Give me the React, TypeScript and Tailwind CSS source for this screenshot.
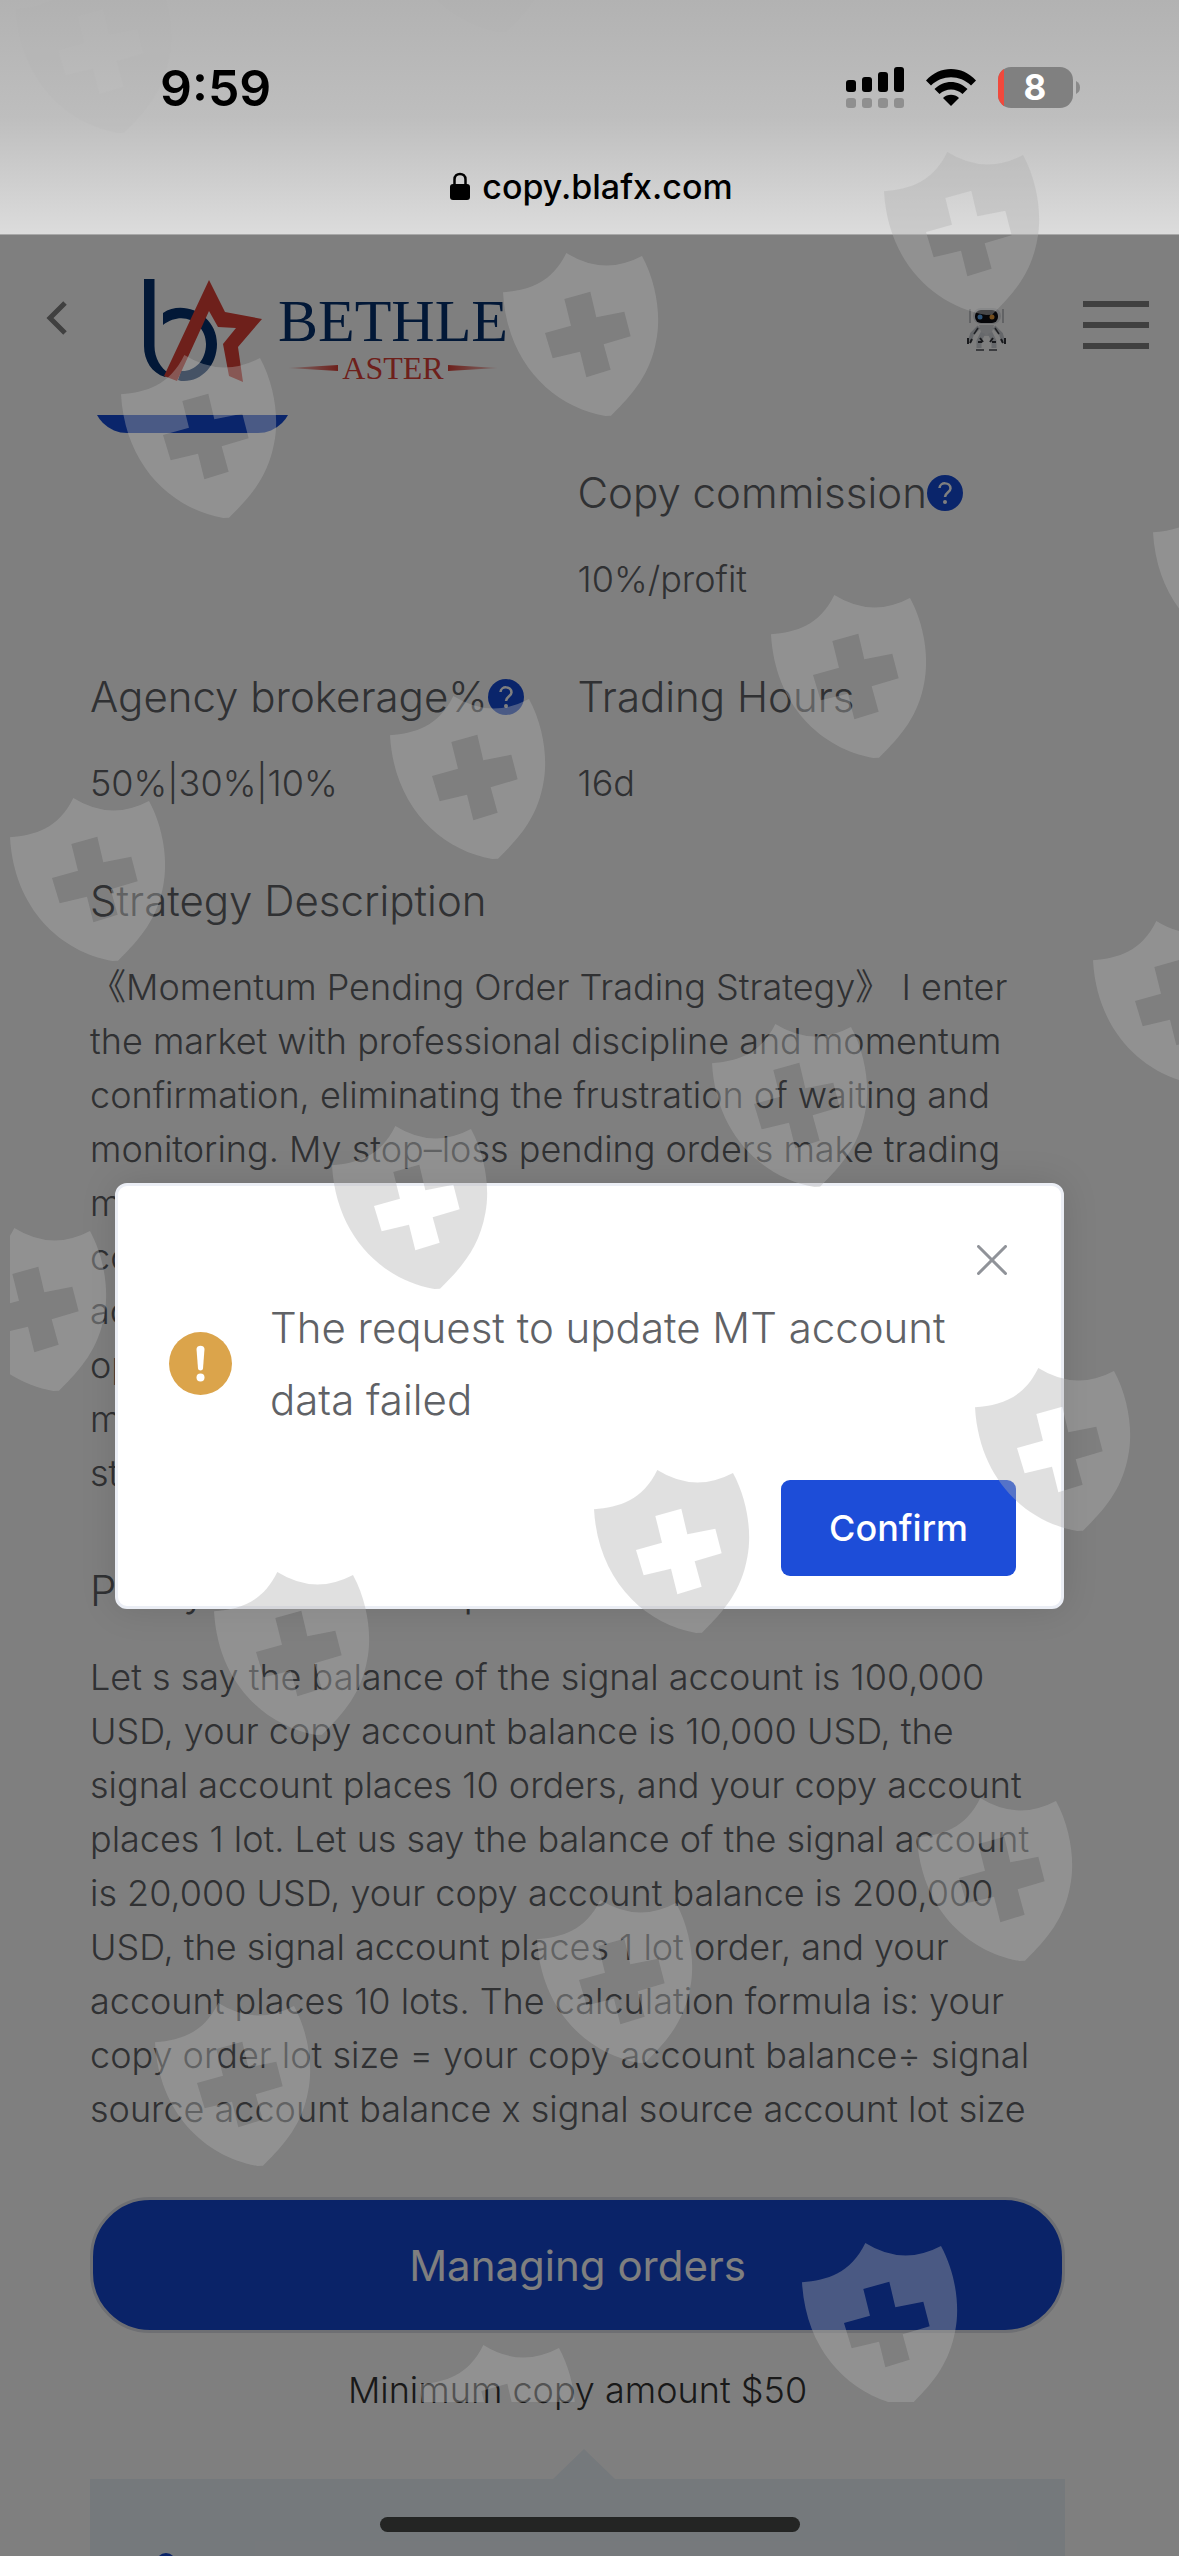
import { useState } from "react";

const strategyLines = [
  "《Momentum Pending Order Trading Strategy》 I enter",
  "the market with professional discipline and momentum",
  "confirmation, eliminating the frustration of waiting and",
  "monitoring. My stop–loss pending orders make trading",
  "more relaxed and stable. Every order is placed with",
  "complete risk control, and the plan is followed",
  "across each session. When a signal appears the",
  "operation is carried out in time, and the",
  "market is left to confirm the direction with a",
  "strict stop on every position.",
];

const policyLines = [
  "Let s say the balance of the signal account is 100,000",
  "USD, your copy account balance is 10,000 USD, the",
  "signal account places 10 orders, and your copy account",
  "places 1 lot. Let us say the balance of the signal account",
  "is 20,000 USD, your copy account balance is 200,000",
  "USD, the signal account places 1 lot order, and your",
  "account places 10 lots. The calculation formula is: your",
  "copy order lot size = your copy account balance÷ signal",
  "source account balance x signal source account lot size",
];

const shields = [
  [16, -30], [398, -131],
  [121, 355], [503, 253], [884, 152],
  [10, 798], [390, 696], [771, 595], [1153, 493],
  [-49, 1228], [332, 1126], [712, 1024], [1093, 921],
  [214, 1572], [594, 1470], [975, 1368],
  [155, 2003], [537, 1900], [917, 1798],
  [420, 2345], [802, 2243],
];

function Watermark() {
  return (
    <svg className="pointer-events-none absolute left-0 top-0 z-30 h-[2402px] w-full" aria-hidden="true">
      <defs>
        <path
          id="shield"
          fillRule="evenodd"
          transform="scale(0.3333) translate(-38 -38)"
          d="M38 156C115 149 183 130 228 38Q340 108 455 47C500 130 512 230 498 300C480 400 430 460 362 526L345 527C190 500 50 370 38 156ZM222 176L242 256L164 278L187 354L269 334L288 411L361 388L340 312L421 288L402 214L318 231L300 154Z"
        />
        <clipPath id="shieldArea">
          <rect x="10" y="0" width="4000" height="2402" />
        </clipPath>
      </defs>
      <g clipPath="url(#shieldArea)" fill="#aeaeae" fillOpacity="0.39">
        {shields.map(([x, y]) => (
          <use key={`${x}-${y}`} href="#shield" x={x} y={y} opacity={y < 0 ? 0.3 : 1} />
        ))}
      </g>
    </svg>
  );
}

function StatusBar() {
  return (
    <header className="shrink-0 border-b border-[#a8a8a8] bg-linear-to-b from-[#b2b2b2] via-[#bebebe] to-[#dcdcdc] pb-6 pt-[60px] text-black">
      <div className="flex h-14 items-center justify-between pl-40 pr-[98px]">
        <span className="text-[50px] font-semibold">9:59</span>
        <div className="flex items-center gap-[22px]">
          <svg width="58" height="42" viewBox="0 0 58 42" aria-label="Signal">
            <rect x="0" y="13" width="10" height="12" rx="3" />
            <rect x="16" y="10" width="10" height="15" rx="3" />
            <rect x="32" y="5" width="10" height="20" rx="3" />
            <rect x="48" y="0" width="10" height="25" rx="3" />
            <g fill="#8f8f8f">
              <rect x="0" y="31" width="10" height="10" rx="3" />
              <rect x="16" y="31" width="10" height="10" rx="3" />
              <rect x="32" y="31" width="10" height="10" rx="3" />
              <rect x="48" y="31" width="10" height="10" rx="3" />
            </g>
          </svg>
          <svg width="50" height="38" viewBox="0 0 50 38" aria-label="Wi-Fi">
            <path d="M0 11.500C14-3.800 36-3.800 50 11.500L45 16.500C34 5.500 16 5.500 5 16.500Z" />
            <path d="M8.500 20C18 10.500 32 10.500 41.500 20L36.500 25C30 19 20 19 13.500 25Z" />
            <path d="M17 29C21.500 24.800 28.500 24.800 33 29L25 37Z" />
          </svg>
          <svg width="83" height="42" viewBox="0 0 83 42" aria-label="Battery 8%">
            <clipPath id="battery">
              <rect width="75" height="41" rx="13" />
            </clipPath>
            <g clipPath="url(#battery)">
              <rect width="75" height="41" fill="#808080" />
              <rect width="6" height="41" fill="#f1493c" />
            </g>
            <path d="M78 14Q82 16 82 20.500Q82 25 78 27Z" fill="#8a8a8a" />
            <text x="37" y="33" textAnchor="middle" fill="#fff" fontSize="35" fontWeight="700">8</text>
          </svg>
        </div>
      </div>
      <div className="mt-[46px] flex h-12 items-center justify-center gap-3 pl-1 text-[34px] font-medium">
        <svg width="20" height="28" viewBox="0 0 20 28" aria-hidden="true">
          <path d="M4.500 13V7.500C4.500 0 15.500 0 15.500 7.500V13" fill="none" stroke="#000" strokeWidth="2.500" />
          <rect x="0" y="12" width="20" height="16" rx="3" />
        </svg>
        <span>copy.blafx.com</span>
      </div>
    </header>
  );
}

function Logo() {
  return (
    <div className="flex items-start">
      <svg width="120" height="106" viewBox="0 0 120 106" aria-hidden="true">
        <path d="M0 0H10.500V67C10.500 79 17 90 25 94L21 98C8 94 0 82 0 67Z" fill="#04306e" />
        <path
          d="M19 34C40 20 73 36 73 65C73 86 58 102 40 102C38 102 36 102 34 101L37 92C50 93 62 82 62 65C62 45 40 30 19 46Z"
          fill="#04306e"
        />
        <path
          d="M65 1L81 33L118 40L94 68L99 103L85 97L79 65L92 49L74 48L65 32L33 102L20 97Z"
          fill="#dc4036"
        />
      </svg>
      <div className="ml-[14px] mt-[11px] flex flex-col items-center font-['Liberation_Serif',serif]">
        <span className="text-[60px] leading-[62px] text-[#04306e]">BETHLE</span>
        <span className="flex items-center gap-1 text-[32px] leading-8 text-[#dc4036]">
          <svg width="50" height="8" viewBox="0 0 50 8" aria-hidden="true">
            <linearGradient id="fadeLeft">
              <stop offset="0" stopColor="#dc4036" stopOpacity="0.2" />
              <stop offset="1" stopColor="#dc4036" />
            </linearGradient>
            <path d="M0 4L50 1V7Z" fill="url(#fadeLeft)" />
          </svg>
          ASTER
          <svg width="50" height="8" viewBox="0 0 50 8" aria-hidden="true">
            <linearGradient id="fadeRight">
              <stop offset="0" stopColor="#dc4036" />
              <stop offset="1" stopColor="#dc4036" stopOpacity="0.2" />
            </linearGradient>
            <path d="M50 4L0 1V7Z" fill="url(#fadeRight)" />
          </svg>
        </span>
      </div>
    </div>
  );
}

function Robot() {
  return (
    <svg width="40" height="48" viewBox="0 0 40 48" aria-hidden="true">
      <path d="M3 4V18M36 4V18" stroke="#8b8f96" strokeWidth="1" />
      <rect x="6" y="3" width="28" height="16" rx="8" fill="#dcdee2" />
      <rect x="8" y="5" width="23" height="13" rx="6" fill="#0c0d12" />
      <circle cx="13" cy="12" r="2.500" fill="#5aa5ee" />
      <circle cx="25" cy="12" r="2.500" fill="#e69a3a" />
      <path d="M12 20H27L24 31H15Z" fill="#d8dade" />
      <path d="M12 22L5 29L3 36M27 22L34 29L36 36" fill="none" stroke="#c9ccd2" strokeWidth="4" />
      <path d="M11 23L7 29M28 23L32 29" stroke="#3e4148" strokeWidth="1.500" />
      <path d="M16 28L12 36V43M23 28L27 36V43" fill="none" stroke="#cfd2d8" strokeWidth="5" />
      <path d="M1 33V39M5 34L3 38M38 33V39M34 34L36 38" stroke="#33353b" strokeWidth="2" />
      <path d="M13 33L16 37M26 33L23 37M11 37H15M25 37H29" stroke="#33353b" strokeWidth="2" />
      <path d="M9 45H17M22 45H30" stroke="#77797f" strokeWidth="2" />
    </svg>
  );
}

function PageHeader() {
  return (
    <div className="flex h-[180px] shrink-0 items-start justify-between pl-[46px] pr-[30px] pt-[44px]">
      <div className="flex items-start">
        <button type="button" aria-label="Back" className="mt-[22px]">
          <svg width="22" height="34" viewBox="0 0 22 34" aria-hidden="true">
            <path d="M19 2L4 17L19 32" fill="none" stroke="#808080" strokeWidth="5" />
          </svg>
        </button>
        <a href="#home" aria-label="Bethle Aster" className="ml-[76px]">
          <Logo />
        </a>
      </div>
      <div className="flex items-start gap-[76px] pt-[22px]">
        <a href="#support" aria-label="Support" className="mt-1">
          <Robot />
        </a>
        <button type="button" aria-label="Menu" className="flex flex-col gap-[15px]">
          <span className="h-[6px] w-[66px] bg-[#808080]" />
          <span className="h-[6px] w-[66px] bg-[#808080]" />
          <span className="h-[6px] w-[66px] bg-[#808080]" />
        </button>
      </div>
    </div>
  );
}

function HelpIcon() {
  return (
    <svg width="36" height="36" viewBox="0 0 36 36" aria-label="Help">
      <circle cx="18" cy="18" r="18" fill="#154bd6" />
      <path d="M12.500 13C13 6.500 23.500 7 23.500 13.500C23.500 17 18 17.500 18 22" fill="none" stroke="#fff" strokeWidth="2.500" />
      <circle cx="18" cy="27" r="2" fill="#fff" />
    </svg>
  );
}

function Field({ label, value, help }: { label: string; value: string; help?: boolean }) {
  return (
    <div>
      <h2 className="mb-7 flex items-center whitespace-nowrap text-[42px] font-[350] leading-[63px]">
        {label}
        {help && <HelpIcon />}
      </h2>
      <p className="text-[36px] font-[350] leading-[54px]">{value}</p>
    </div>
  );
}

function Paragraph({ title, lines }: { title: string; lines: string[] }) {
  return (
    <section className="mt-[59px]">
      <h2 className="mb-7 text-[42px] font-[350] leading-[63px]">{title}</h2>
      <p className="whitespace-nowrap text-[36px] font-[350] leading-[54px]">
        {lines.map((line) => (
          <span key={line} className="block">
            {line}
          </span>
        ))}
      </p>
    </section>
  );
}

function Dialog({ onClose }: { onClose: () => void }) {
  return (
    <div className="absolute inset-0 z-20 flex items-center justify-center bg-black/50 px-[115px]">
      <div
        role="alertdialog"
        aria-labelledby="dialog-message"
        className="w-full rounded-xl border-3 border-[#ebeef5] bg-white pb-[30px] pl-[51px] pr-[45px] pt-[50px] shadow-[0_0_36px_rgba(0,0,0,0.12)]"
      >
        <div className="flex justify-end">
          <button type="button" aria-label="Close" onClick={onClose} className="flex size-12 items-center justify-center">
            <svg width="30" height="30" viewBox="0 0 30 30" aria-hidden="true">
              <path d="M1.500 1.500L28.500 28.500M28.500 1.500L1.500 28.500" stroke="#909399" strokeWidth="3" strokeLinecap="round" />
            </svg>
          </button>
        </div>
        <div className="mt-2 flex items-center gap-[38px]">
          <svg width="63" height="63" viewBox="0 0 63 63" className="shrink-0" aria-hidden="true">
            <circle cx="31.500" cy="31.500" r="31.500" fill="#dba44b" />
            <path d="M27.500 17C27.500 12.500 35.500 12.500 35.500 17L34 36.500C33.800 39 29.200 39 29 36.500Z" fill="#fff" />
            <circle cx="31.500" cy="45.500" r="4" fill="#fff" />
          </svg>
          <p id="dialog-message" className="text-[42px] font-[350] leading-[72px] text-[#606266]">
            The request to update MT account data failed
          </p>
        </div>
        <div className="mt-11 flex justify-end">
          <button
            type="button"
            onClick={onClose}
            className="h-24 w-[235px] rounded-[9px] bg-[#1d4dd8] text-[36px] font-medium text-white"
          >
            Confirm
          </button>
        </div>
      </div>
    </div>
  );
}

export default function App() {
  const [open, setOpen] = useState(true);

  return (
    <div className="relative flex h-screen flex-col overflow-hidden bg-white font-[Inter,'Noto_Sans_CJK_SC',sans-serif]">
      <StatusBar />

      <main className="relative flex flex-1 flex-col overflow-hidden bg-white text-[#606266]">
        <PageHeader />

        <div className="flex flex-1 flex-col pl-[90px] pr-[114px]">
          <div className="ml-[3px] h-[18px] w-[199px] overflow-hidden">
            <div className="-mt-[54px] h-[72px] rounded-[34px] bg-[#154bd6]" />
          </div>

          <div className="mt-7 grid grid-cols-2 gap-y-[59px]">
            <div className="col-start-2">
              <Field label="Copy commission" value="10%/profit" help />
            </div>
            <Field label="Agency brokerage%" value="50%|30%|10%" help />
            <Field label="Trading Hours" value="16d" />
          </div>

          <Paragraph title="Strategy Description" lines={strategyLines} />
          <Paragraph title="Policy Follow Example" lines={policyLines} />

          <button
            type="button"
            className="mt-[61px] h-[136px] shrink-0 rounded-[60px] border-3 border-[#dcdfe6] bg-[#1547d1] text-[42px] text-white"
          >
            Managing orders
          </button>
          <p className="mt-[30px] text-center text-[36px] font-[350] leading-[54px] text-[#333333]">
            Minimum copy amount $50
          </p>

          <div className="mt-8 flex flex-1 flex-col">
            <svg width="62" height="30" viewBox="0 0 62 30" className="ml-[463px] shrink-0" aria-hidden="true">
              <path d="M31 0L62 30H0Z" fill="#ebf2f8" />
            </svg>
            <div className="flex-1 overflow-hidden bg-[#ebf2f8] pl-[66px] pt-[74px]">
              <div className="size-5 rounded-full bg-[#1547d1]" />
            </div>
          </div>
        </div>

        {open && <Dialog onClose={() => setOpen(false)} />}
      </main>

      <Watermark />
      <div className="absolute inset-x-0 bottom-6 z-40 mx-auto h-[15px] w-[420px] rounded-full bg-[#242524]" />
    </div>
  );
}
